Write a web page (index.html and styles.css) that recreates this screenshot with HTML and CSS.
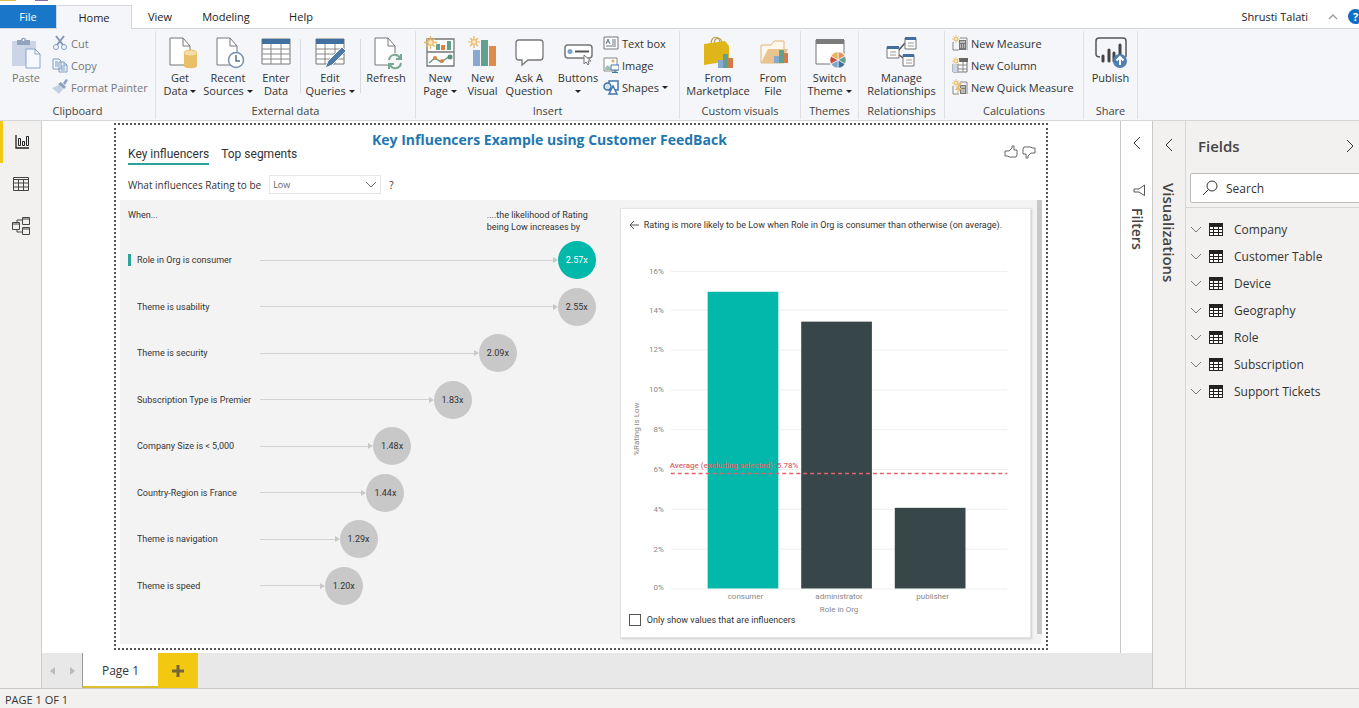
FILE: index.html
```html
<!DOCTYPE html>
<html lang="en">
<head>
<meta charset="UTF-8">
<meta name="viewport" content="width=device-width, initial-scale=1.0">
<title>Key Influencers - Power BI Desktop</title>
<link rel="stylesheet" href="styles.css">
</head>
<body>
<!-- Shared symbols -->
<svg class="symbols" width="0" height="0">
<symbol id="table" viewBox="0 0 14 13"><path d="M0 0h14v13H0z" fill="#222"/><path d="M1 4h3v2H1zm4 0h4v2H5zm5 0h3v2h-3zM1 7h3v2H1zm4 0h4v2H5zm5 0h3v2h-3zM1 10h3v2H1zm4 0h4v2H5zm5 0h3v2h-3z" fill="#fff"/></symbol>
<symbol id="down" viewBox="0 0 12 8"><path d="M1 1l5 5 5-5" fill="none" stroke="#777"/></symbol>
<symbol id="left" viewBox="0 0 8 14"><path d="M7 1L1 7l6 6" fill="none" stroke="#333"/></symbol>
<symbol id="right" viewBox="0 0 8 14"><path d="M1 1l6 6-6 6" fill="none" stroke="#333"/></symbol>
<symbol id="sun" viewBox="0 0 12 12"><path d="M6 0v12M0 6h12M2 2l8 8M10 2l-8 8" stroke="#e9b765" stroke-width="1.2"/><circle cx="6" cy="6" r="2.5" fill="#fbe6bd" stroke="#e9b765"/></symbol>
</svg>

<header class="titlebar">
<div class="quick"><span class="chip gold"></span><span class="chip purple"></span></div>
<nav class="tabs">
<button class="tab file">File</button>
<button class="tab active">Home</button>
<button class="tab view">View</button>
<button class="tab modeling">Modeling</button>
<button class="tab help">Help</button>
<span class="user">Shrusti Talati</span>
<svg class="collapse" width="10" height="6" viewBox="0 0 10 6"><path d="M1 5l4-4 4 4" fill="none" stroke="#999" stroke-width="1.3"/></svg>
<span class="question">?</span>
</nav>
</header>

<div class="ribbon">
<section class="group clipboard">
<div class="tools">
<button class="tool muted"><svg width="34" height="34" viewBox="0 0 34 34"><path d="M3 5h24v25H3z" fill="#ccd5e8"/><path d="M8 9V4h4c0-3 5-3 5 0h4v5z" fill="#92a3bb"/><circle cx="14.500" cy="4" r="1" fill="#fff"/><path d="M17 13h9l5 5v14H17z" fill="#f5f8fd" stroke="#8aa3cb"/><path d="M26 13v5h5" fill="none" stroke="#8aa3cb"/></svg>Paste</button>
<div class="stack muted">
<button class="small"><svg width="16" height="16" viewBox="0 0 16 16"><path d="M4 1l7 9M12 1L5 10" stroke="#8498b5" stroke-width="2"/><circle cx="4" cy="12" r="2.500" fill="none" stroke="#7f9dc5"/><circle cx="12" cy="12" r="2.500" fill="none" stroke="#7f9dc5"/></svg>Cut</button>
<button class="small"><svg width="16" height="16" viewBox="0 0 16 16"><path d="M1 2h6l2 2v8H1zM7 5h5l3 3v7H7zM12 5v3h3M3 5h3M3 7h3M3 9h3M9 9h4M9 11h4M9 13h4" fill="#f2f6fc" stroke="#7f9dc5"/></svg>Copy</button>
<button class="small"><svg width="16" height="16" viewBox="0 0 16 16"><path d="M0 9l7-3 4 4-4 5z" fill="#c3d0e4"/><path d="M6 5l3-2 5 5-2 2z" fill="#8ba0be"/><path d="M11 4l3-4 2 1-3 5z" fill="#8ba0be"/></svg>Format Painter</button>
</div>
</div>
<h2>Clipboard</h2>
</section>

<section class="group external">
<div class="tools">
<button class="tool"><svg width="34" height="34" viewBox="0 0 34 34"><path d="M7 2h13l7 8v19H7z" fill="#fff" stroke="#777"/><path d="M20 2v8h7" fill="none" stroke="#777"/><path d="M21 17v13c0 3 13 3 13 0V17z" fill="#e9c069"/><ellipse cx="27.500" cy="17" rx="6.500" ry="3" fill="#f5dda6" stroke="#e9c069"/></svg>Get<span>Data <i class="caret"></i></span></button>
<button class="tool"><svg width="34" height="34" viewBox="0 0 34 34"><path d="M6 2h13l7 8v19H6z" fill="#fff" stroke="#777"/><path d="M19 2v8h7" fill="none" stroke="#777"/><circle cx="25" cy="24" r="7.500" fill="#fff" stroke="#7892ad" stroke-width="1.500"/><path d="M25 19v6h4" fill="none" stroke="#58728e" stroke-width="1.500"/></svg>Recent<span>Sources <i class="caret"></i></span></button>
<button class="tool"><svg width="34" height="34" viewBox="0 0 34 34"><path d="M3 3h28v25H3z" fill="#fff" stroke="#777"/><path d="M3 3h28v5H3z" fill="#416f9f"/><path d="M3 13h28M3 18h28M3 23h28M12 8v20M22 8v20" stroke="#888"/></svg>Enter<span>Data</span></button>
<button class="tool split"><svg width="34" height="34" viewBox="0 0 34 34"><path d="M3 3h28v25H3z" fill="#fff" stroke="#777"/><path d="M3 3h28v5H3z" fill="#416f9f"/><path d="M3 13h28M3 18h28M3 23h28M12 8v20M22 8v20" stroke="#888"/><path d="M12 32l3-7 14-14 4 4-14 14z" fill="#4d79a9" stroke="#f4f6f9"/></svg>Edit<span>Queries <i class="caret"></i></span></button>
<button class="tool split"><svg width="34" height="34" viewBox="0 0 34 34"><path d="M6 2h13l7 8v19H6z" fill="#fff" stroke="#777"/><path d="M19 2v8h7" fill="none" stroke="#777"/><circle cx="26" cy="25" r="8" fill="#f4f6f9"/><path d="M20 24c1-6 8-7 11-2m1-4v5h-5M32 27c-1 6-8 7-11 2m-1 4v-5h5" fill="none" stroke="#78a891" stroke-width="2"/></svg>Refresh</button>
</div>
<h2>External data</h2>
</section>

<section class="group insert">
<div class="tools">
<button class="tool"><svg width="34" height="34" viewBox="0 0 34 34"><path d="M4 3h27v27H4zM4 16h27" fill="#fff" stroke="#777" stroke-width="1.300"/><path d="M13 8h4v6h-4zM24 5h4v9h-4z" fill="#62a08c"/><path d="M18 9h4v5h-4z" fill="#d98443"/><path d="M6 27l6-5 6 4 9-6" fill="none" stroke="#6a9688" stroke-width="1.500"/><circle cx="12" cy="22" r="2" fill="#d98443"/><circle cx="19" cy="25" r="2" fill="#d98443"/><circle cx="27" cy="21" r="2.500" fill="#57917e"/><use href="#sun" x="1" y="0" width="13" height="13"/></svg>New<span>Page <i class="caret"></i></span></button>
<button class="tool"><svg width="34" height="34" viewBox="0 0 34 34"><path d="M7 14h7v16H7z" fill="#88a9cf"/><path d="M15 4h7v26h-7z" fill="#63a18f"/><path d="M23 10h7v20h-7z" fill="#df8b49"/><use href="#sun" x="2" y="0" width="12" height="12"/></svg>New<span>Visual</span></button>
<button class="tool"><svg width="34" height="34" viewBox="0 0 34 34"><path d="M6 4h22q3 0 3 3v14q0 3-3 3H16l-6 5v-5H7q-3 0-3-3V7q0-3 3-3z" fill="#fff" stroke="#777" stroke-width="1.300"/></svg>Ask A<span>Question</span></button>
<button class="tool"><svg width="34" height="34" viewBox="0 0 34 34"><rect x="4" y="9" width="27" height="13" rx="3" fill="#fff" stroke="#777" stroke-width="1.500"/><circle cx="9" cy="15.500" r="2.500" fill="#7aa3c8"/><path d="M14 15.500h14" stroke="#555" stroke-width="2"/><path d="M23 19v9l2-2 2 3 1-1-1-3h3z" fill="#fff" stroke="#777"/></svg>Buttons<span><i class="caret"></i></span></button>
<div class="stack">
<button class="small"><svg width="16" height="16" viewBox="0 0 16 16"><path d="M1 2h14v12H1z" fill="#fff" stroke="#777"/><path d="M3 9l2-5 2 5M4 7h2M9 5h4M9 7h4M9 9h4M3 11h10" fill="none" stroke="#66788a"/></svg>Text box</button>
<button class="small"><svg width="16" height="16" viewBox="0 0 16 16"><path d="M1 1h13v13H1z" fill="#fff" stroke="#888"/><circle cx="10" cy="4" r="1.500" fill="#e2ae5d"/><path d="M2 13c0-6 5-6 6 0z" fill="#9fc0b3"/><path d="M8 8h8v5H8zM12 13v2M9 15.500h6" fill="#fff" stroke="#3f76ae"/></svg>Image</button>
<button class="small"><svg width="16" height="16" viewBox="0 0 16 16"><path d="M6 2h9v9H6z" fill="#fff" stroke="#3f76ae" stroke-width="1.500"/><circle cx="4.500" cy="7.500" r="3.500" fill="#d5e2ef" stroke="#3f76ae" stroke-width="1.500"/><path d="M10 7l4 8H6z" fill="#fff" stroke="#3f76ae" stroke-width="1.500"/></svg>Shapes <i class="caret"></i></button>
</div>
</div>
<h2>Insert</h2>
</section>

<section class="group custom">
<div class="tools">
<button class="tool"><svg width="34" height="34" viewBox="0 0 34 34"><path d="M10 8c0-9 9-9 9 0M13 9c0-9 8-9 8-1" fill="none" stroke="#b9a04c" stroke-width="1.200"/><path d="M3 8l21-3 4 5v15L3 29z" fill="#dfb51a"/><path d="M17 24h5v8h-5z" fill="#88a9cf"/><path d="M22 18h5v14h-5z" fill="#63a18f"/><path d="M27 22h5v10h-5z" fill="#cf7c4a"/></svg>From<span>Marketplace</span></button>
<button class="tool"><svg width="34" height="34" viewBox="0 0 34 34"><path d="M5 27V9h10l3-4h10v22z" fill="#fdf7ec" stroke="#e4b779"/><path d="M5 27l7-14h20l-6 14z" fill="#eac48e"/><path d="M18 20h5v7h-5z" fill="#88a9cf"/><path d="M23 14h5v13h-5z" fill="#63a18f"/><path d="M28 17h4v10h-4z" fill="#cf7c4a"/></svg>From<span>File</span></button>
</div>
<h2>Custom visuals</h2>
</section>

<section class="group themes">
<div class="tools">
<button class="tool"><svg width="34" height="34" viewBox="0 0 34 34"><path d="M3 4h28v24H3z" fill="#fff" stroke="#777"/><path d="M3 3h28v5H3z" fill="#7b7b7b"/><circle cx="25" cy="24" r="9" fill="#fff"/><g stroke="#fff" stroke-width=".6"><path d="M25 24v-8a8 8 0 0 1 7 4z" fill="#e2945c"/><path d="M25 24l7-4a8 8 0 0 1 0 8z" fill="#62a08c"/><path d="M25 24l7 4a8 8 0 0 1-7 4z" fill="#3f6fa0"/><path d="M25 24v8a8 8 0 0 1-7-4z" fill="#7aa3c8"/><path d="M25 24l-7 4a8 8 0 0 1 0-8z" fill="#c94b3c"/><path d="M25 24l-7-4a8 8 0 0 1 7-4z" fill="#e8b55b"/></g></svg>Switch<span>Theme <i class="caret"></i></span></button>
</div>
<h2>Themes</h2>
</section>

<section class="group relations">
<div class="tools">
<button class="tool"><svg width="34" height="34" viewBox="0 0 34 34"><path d="M13 15l7-8M13 18l5 4" stroke="#555" stroke-width="1.500"/><path d="M2 11h12v11H2zM20 2h11v11H20zM18 19h11v11H18z" fill="#fff" stroke="#777"/><path d="M2 10h12v3H2zM20 1h11v3H20zM18 18h11v3H18z" fill="#416f9f"/><path d="M5 16h6M5 19h6M23 7h6M23 10h6M21 24h6M21 27h6" stroke="#999"/></svg>Manage<span>Relationships</span></button>
</div>
<h2>Relationships</h2>
</section>

<section class="group calc">
<div class="tools">
<div class="stack">
<button class="small"><svg width="16" height="16" viewBox="0 0 16 16"><path d="M1 7v8h6M8 3h7v12" fill="none" stroke="#888"/><path d="M7 5h7v10H7z" fill="#777"/><path d="M8 7h5M8 10h1m1 0h1m1 0h1M8 12h1m1 0h1m1 0h1" stroke="#fff"/><use href="#sun" width="8" height="8"/></svg>New Measure</button>
<button class="small"><svg width="16" height="16" viewBox="0 0 16 16"><path d="M1 2h14v13H1z" fill="#fff" stroke="#777"/><path d="M7 1h9v4H7z" fill="#666"/><path d="M1 7h5v8H1z" fill="#c9d7ea"/><path d="M6 5v10M11 5v10M6 8h9M6 12h9" stroke="#888"/><path d="M0 0h7v7H0z" fill="#f4f6f9"/><use href="#sun" width="8" height="8"/></svg>New Column</button>
<button class="small"><svg width="16" height="16" viewBox="0 0 16 16"><path d="M1 7v8h6M8 3h7v12" fill="none" stroke="#888"/><path d="M8 6h6v9H8z" fill="#777"/><path d="M9 8h4M9 11h4M9 13h4" stroke="#fff"/><path d="M7 4L3 11h3l-2 5 6-7H7l3-5z" fill="#e5bd7c"/><use href="#sun" width="8" height="8"/></svg>New Quick Measure</button>
</div>
</div>
<h2>Calculations</h2>
</section>

<section class="group share">
<div class="tools">
<button class="tool"><svg width="34" height="34" viewBox="0 0 34 34"><path d="M6 21c-3 0-4-1-4-3V5q0-3 3-3h24q3 0 3 3v16" fill="none" stroke="#555" stroke-width="1.500"/><path d="M9 20v5M15 14v11M20 17v8M26 9v14" stroke="#444" stroke-width="3" stroke-linecap="round"/><circle cx="26" cy="25" r="7" fill="#4f7fae"/><path d="M26 29v-8M22.500 24.500L26 21l3.500 3.500" fill="none" stroke="#fff" stroke-width="2"/></svg>Publish</button>
</div>
<h2>Share</h2>
</section>
</div>

<main class="workspace">
<nav class="rail">
<button class="railbtn on" aria-label="Report"><svg width="20" height="20" viewBox="0 0 20 20"><path d="M4 3v13h13" fill="none" stroke="#222" stroke-width="1.300"/><path d="M6.500 6.500h2v7h-2zM10.500 9.500h2v4h-2zM14.500 4.500h2v9h-2z" fill="none" stroke="#222"/></svg></button>
<button class="railbtn" aria-label="Data"><svg width="20" height="20" viewBox="0 0 20 20"><path d="M2.500 3.500h15v13h-15zM2.500 5.500h15M2.500 9h15M2.500 13h15M7.500 5.500v11M12.500 5.500v11" fill="none" stroke="#444"/></svg></button>
<button class="railbtn" aria-label="Model"><svg width="20" height="20" viewBox="0 0 20 20"><path d="M1.500 6.500h7v7h-7zM11.500 1.500h7v7h-7zM11.500 11.500h7v7h-7zM1.500 8h7M11.500 3h7M11.500 13h7M6 6.500V4h5.500M6 13.500V16h5.500" fill="none" stroke="#444"/></svg></button>
</nav>

<div class="center">
<div class="stage">
<div class="canvas">
<article class="report">
<div class="top">
<div class="modes"><a href="#key" class="mode on">Key influencers</a><a href="#segments" class="mode">Top segments</a></div>
<h1>Key Influencers Example using Customer FeedBack</h1>
<div class="thumbs">
<svg width="14" height="14" viewBox="0 0 14 14"><path d="M1 6h4l3-3V1h2v4h3v5l-1 2H5l-1-1H1z" fill="none" stroke="#666"/></svg>
<svg width="14" height="14" viewBox="0 0 14 14"><path d="M13 8H9l-3 3v2H4V9H1V4l1-2h7l1 1h3z" fill="none" stroke="#666"/></svg>
</div>
</div>
<div class="ask">
<label for="rating">What influences Rating to be</label>
<span class="pick"><select id="rating"><option>Low</option><option>High</option></select><svg width="12" height="8"><use href="#down"/></svg></span>
<span>?</span>
</div>
<div class="body">
<div class="factors">
<div class="heads"><span>When...</span><span class="likely">....the likelihood of Rating<br>being Low increases by</span></div>
<ul class="list">
<li class="on"><span class="name">Role in Org is consumer</span><span class="track"><span class="reach" style="width:100%"><i></i><b>2.57x</b></span></span></li>
<li><span class="name">Theme is usability</span><span class="track"><span class="reach" style="width:100%"><i></i><b>2.55x</b></span></span></li>
<li><span class="name">Theme is security</span><span class="track"><span class="reach" style="width:76.5%"><i></i><b>2.09x</b></span></span></li>
<li><span class="name">Subscription Type is Premier</span><span class="track"><span class="reach" style="width:63%"><i></i><b>1.83x</b></span></span></li>
<li><span class="name">Company Size is &lt; 5,000</span><span class="track"><span class="reach" style="width:45%"><i></i><b>1.48x</b></span></span></li>
<li><span class="name">Country-Region is France</span><span class="track"><span class="reach" style="width:43%"><i></i><b>1.44x</b></span></span></li>
<li><span class="name">Theme is navigation</span><span class="track"><span class="reach" style="width:35%"><i></i><b>1.29x</b></span></span></li>
<li><span class="name">Theme is speed</span><span class="track"><span class="reach" style="width:30.6%"><i></i><b>1.20x</b></span></span></li>
</ul>
</div>
<div class="card">
<p class="why"><svg width="10" height="10" viewBox="0 0 10 10"><path d="M10 5H1M5 1L1 5l4 4" fill="none" stroke="#555"/></svg>Rating is more likely to be Low when Role in Org is consumer than otherwise (on average).</p>
<svg class="chart" viewBox="0 0 411 376">
<path d="M50 31.500h338M50 70.500h338M50 110.500h338M50 150.500h338M50 190.500h338M50 230.500h338M50 270.500h338M50 310.500h338M50 350.500h338" stroke="#eee"/>
<g class="ticks"><text x="43" y="34">16%</text><text x="43" y="73">14%</text><text x="43" y="113">12%</text><text x="43" y="153">10%</text><text x="43" y="193">8%</text><text x="43" y="233">6%</text><text x="43" y="273">4%</text><text x="43" y="313">2%</text><text x="43" y="352">0%</text></g>
<rect x="87" y="52" width="71" height="298" fill="#01b8aa"/>
<rect x="181" y="82" width="71" height="268" fill="#374649"/>
<rect x="275" y="269" width="71" height="81" fill="#374649"/>
<path d="M50 234.500h338" stroke="#e0646c" stroke-width="1.500" stroke-dasharray="4 3"/>
<text class="avg" x="49" y="229">Average (excluding selected): 5.78%</text>
<g class="cats"><text x="125" y="361">consumer</text><text x="219" y="361">administrator</text><text x="313" y="361">publisher</text><text x="219" y="374">Role in Org</text><text transform="translate(18 190) rotate(-90)">%Rating is Low</text></g>
</svg>
<label class="only"><input type="checkbox">Only show values that are influencers</label>
</div>
<div class="scroll"></div>
</div>
</article>
</div>
<aside class="filters">
<svg width="8" height="14"><use href="#left"/></svg>
<svg class="funnel" width="12" height="12" viewBox="0 0 12 12"><path d="M11.500 1v10.500L6 8H1V5h5z" fill="none" stroke="#555"/></svg>
<h3>Filters</h3>
</aside>
</div>
<nav class="pages">
<button class="arrow" aria-label="Previous page"><svg width="5" height="8" viewBox="0 0 5 8"><path d="M5 0v8L0 4z" fill="#bbb"/></svg></button>
<button class="arrow" aria-label="Next page"><svg width="5" height="8" viewBox="0 0 5 8"><path d="M0 0v8l5-4z" fill="#bbb"/></svg></button>
<button class="page">Page 1</button>
<button class="add" aria-label="New page"><svg width="12" height="12" viewBox="0 0 12 12"><path d="M6 0v12M0 6h12" stroke="#75663a" stroke-width="3"/></svg></button>
</nav>
</div>

<aside class="visuals">
<svg width="8" height="14"><use href="#left"/></svg>
<h3>Visualizations</h3>
</aside>

<aside class="fields">
<div class="fieldhead"><h3>Fields</h3><svg width="8" height="14"><use href="#right"/></svg></div>
<label class="search"><svg width="16" height="16" viewBox="0 0 16 16"><circle cx="10" cy="6" r="5" fill="none" stroke="#333"/><path d="M6.500 9.500L1 15" stroke="#333"/></svg><input type="text" placeholder="Search" aria-label="Search fields"></label>
<ul class="tables">
<li><svg width="12" height="8"><use href="#down"/></svg><svg width="14" height="13"><use href="#table"/></svg>Company</li>
<li><svg width="12" height="8"><use href="#down"/></svg><svg width="14" height="13"><use href="#table"/></svg>Customer Table</li>
<li><svg width="12" height="8"><use href="#down"/></svg><svg width="14" height="13"><use href="#table"/></svg>Device</li>
<li><svg width="12" height="8"><use href="#down"/></svg><svg width="14" height="13"><use href="#table"/></svg>Geography</li>
<li><svg width="12" height="8"><use href="#down"/></svg><svg width="14" height="13"><use href="#table"/></svg>Role</li>
<li><svg width="12" height="8"><use href="#down"/></svg><svg width="14" height="13"><use href="#table"/></svg>Subscription</li>
<li><svg width="12" height="8"><use href="#down"/></svg><svg width="14" height="13"><use href="#table"/></svg>Support Tickets</li>
</ul>
</aside>
</main>

<footer class="status">PAGE 1 OF 1</footer>
</body>
</html>
```
FILE: styles.css
```css
* {
  box-sizing: border-box;
}
body {
  margin: 0;
  min-height: 100vh;
  display: flex;
  flex-direction: column;
  overflow-x: hidden;
  font-family: "Open Sans", sans-serif;
  font-size: 11px;
  color: #333;
  background: #fff;
}
button, input, select {
  font: inherit;
  color: inherit;
  border: 0;
  padding: 0;
  background: none;
}
h1, h2, h3, p, ul {
  margin: 0;
  padding: 0;
  list-style: none;
}
svg {
  flex: none;
}
.symbols {
  position: absolute;
}

/* Title bar */
.quick {
  display: flex;
  height: 5px;
}
.chip {
  height: 1px;
  width: 16px;
}
.gold {
  background: #d8bd52;
}
.purple {
  width: 13px;
  margin-left: 19px;
  background: #8a6aa0;
}
.tabs {
  display: flex;
  align-items: center;
  height: 24px;
  border-bottom: 1px solid #d5d6d8;
}
.tab {
  height: 23px;
  color: #222;
}
.file {
  width: 56px;
  color: #fff;
  background: #1976c9;
}
.active {
  width: 76px;
  height: 24px;
  margin-bottom: -1px;
  border: 1px solid #d5d6d8;
  border-bottom: 0;
  background: #f4f6f9;
}
.view {
  width: 56px;
}
.modeling {
  width: 76px;
}
.help {
  width: 74px;
}
.user {
  margin-left: auto;
  color: #222;
}
.collapse {
  margin: 0 10px 0 20px;
}
.question {
  flex: none;
  width: 15px;
  height: 15px;
  margin-right: -4px;
  border-radius: 50%;
  background: #0f6fc6;
  color: #fff;
  font-weight: bold;
  line-height: 15px;
  text-align: center;
}

/* Ribbon */
.ribbon {
  display: grid;
  grid-template-columns: 156px 260px 264px 121px 58px 86px 139px 54px;
  height: 92px;
  padding: 2px 0 1px;
  background: #f4f6f9;
  border-bottom: 1px solid #d5d6d8;
}
.group {
  display: flex;
  flex-direction: column;
  border-right: 1px solid #dfe1e4;
}
.group h2 {
  margin-top: auto;
  padding-bottom: 1px;
  font-size: 11px;
  font-weight: normal;
  line-height: 14px;
  text-align: center;
  color: #444;
}
.tools {
  display: grid;
  grid-auto-flow: column;
  line-height: 13px;
}
.clipboard .tools {
  grid-template-columns: 52px 1fr;
}
.external .tools {
  grid-template-columns: 48px 48px 48px 60px 52px;
}
.insert .tools {
  grid-template-columns: 48px 37px 56px 42px 1fr;
}
.custom .tools {
  grid-template-columns: 76px 34px;
}
.tool {
  display: flex;
  flex-direction: column;
  align-items: center;
  height: 70px;
  padding-top: 5px;
  white-space: nowrap;
  line-height: 13px;
}
.tool svg {
  margin-bottom: 1px;
}
.split {
  background: linear-gradient(#d9dbde, #d9dbde) 0 8px / 1px 54px no-repeat;
}
.muted {
  color: #777;
}
.caret {
  display: inline-block;
  border: 3px solid transparent;
  border-top-color: #222;
  border-bottom: 0;
  vertical-align: 2px;
}
.stack {
  display: flex;
  flex-direction: column;
  padding-top: 1px;
}
.insert .stack {
  padding-left: 4px;
}
.calc .stack {
  padding-left: 7px;
}
.small {
  display: flex;
  align-items: center;
  gap: 3px;
  height: 22px;
  white-space: nowrap;
}

/* Workspace */
.workspace {
  flex: 1;
  display: flex;
}
.rail {
  width: 42px;
  flex: none;
  background: #f3f1ef;
  border-right: 1px solid #ccc;
}
.railbtn {
  display: flex;
  align-items: center;
  justify-content: center;
  width: 41px;
  height: 42px;
}
.railbtn.on {
  border-left: 3px solid #f2c811;
}
.center {
  flex: 1;
  min-width: 0;
  display: flex;
  flex-direction: column;
}
.stage {
  flex: 1;
  display: flex;
}
.canvas {
  flex: 1;
  display: flex;
  padding: 2px 72px 3px;
}
.report {
  flex: 1;
  display: flex;
  flex-direction: column;
  border: 2px dotted #555;
}
.top {
  display: grid;
  grid-template-columns: 256px auto 1fr;
  align-items: start;
  height: 44px;
}
.modes {
  display: flex;
  gap: 12px;
  padding: 20px 0 0 12px;
  font-family: Roboto, sans-serif;
}
.mode {
  color: #333;
  font-size: 12px;
  line-height: 18px;
  text-decoration: none;
  border-bottom: 2px solid transparent;
}
.mode.on {
  border-color: #2ba39a;
}
h1 {
  padding-top: 5px;
  font-size: 14px;
  line-height: 20px;
  color: #1f77b0;
}
.thumbs {
  display: flex;
  justify-content: end;
  gap: 4px;
  padding: 20px 10px 0 0;
}
.ask {
  display: flex;
  align-items: center;
  gap: 8px;
  height: 31px;
  padding-left: 12px;
  font-size: 10px;
}
.pick {
  display: flex;
  align-items: center;
  width: 112px;
  height: 19px;
  padding-right: 3px;
  border: 1px solid #e6e6e6;
}
.pick select {
  flex: 1;
  appearance: none;
  padding-left: 3px;
  font-size: 9px;
  color: #666;
}
.body {
  flex: 1;
  display: flex;
  margin: 0 4px 4px;
  background: #f3f3f3;
  font-family: Roboto, sans-serif;
}
.factors {
  flex: 1;
  display: flex;
  flex-direction: column;
  padding: 9px 24px 35px 8px;
  font-size: 9px;
}
.heads {
  display: flex;
  justify-content: space-between;
  line-height: 12px;
}
.likely {
  width: 109px;
  white-space: nowrap;
}
.list {
  flex: 1;
  display: flex;
  flex-direction: column;
  padding-top: 4px;
}
.list li {
  flex: 1;
  display: flex;
  align-items: center;
}
.name {
  flex: none;
  width: 132px;
  padding-left: 6px;
  border-left: 3px solid transparent;
  line-height: 12px;
}
.on .name {
  border-color: #2ba39a;
}
.track {
  flex: 1;
}
.reach {
  display: flex;
  align-items: center;
}
.reach i {
  flex: 1;
  display: flex;
  align-items: center;
}
.reach i::before {
  content: "";
  flex: 1;
  height: 1px;
  background: #d3d3d3;
}
.reach i::after {
  content: "";
  border: 3px solid transparent;
  border-left: 5px solid #c8c8c8;
  border-right: 0;
}
.reach b {
  width: 38px;
  height: 38px;
  border-radius: 50%;
  background: #c8c8c8;
  font-weight: normal;
  line-height: 38px;
  text-align: center;
}
.on .reach b {
  background: #01b8aa;
  color: #fff;
}
.card {
  width: 44.6%;
  flex: none;
  display: flex;
  flex-direction: column;
  margin: 8px 6px 6px 0;
  background: #fff;
  border: 1px solid #e4e4e4;
  box-shadow: 1px 1px 2px #ccc;
}
.why {
  display: flex;
  align-items: center;
  gap: 5px;
  height: 31px;
  padding-left: 8px;
  font-size: 9px;
  white-space: nowrap;
}
.chart {
  width: 100%;
  font-size: 8px;
}
.ticks {
  fill: #888;
  text-anchor: end;
}
.cats {
  fill: #888;
  text-anchor: middle;
}
.avg {
  fill: #e0646c;
  font-weight: 500;
}
.only {
  display: flex;
  align-items: center;
  gap: 6px;
  padding-left: 8px;
  font-size: 9px;
}
.only input {
  appearance: none;
  width: 12px;
  height: 12px;
  margin: 0;
  border: 1px solid #555;
}
.scroll {
  width: 5px;
  margin-bottom: 10px;
  background: #c8c8c8;
}

/* Side panels */
.filters, .visuals {
  flex: none;
  display: flex;
  flex-direction: column;
  align-items: center;
  width: 32px;
  padding-top: 15px;
  border-left: 1px solid #c8c8c8;
}
.filters h3, .visuals h3 {
  writing-mode: vertical-rl;
  font-size: 14px;
  line-height: 18px;
  font-weight: 600;
  color: #444;
}
.funnel {
  margin: 34px 0 12px 4px;
}
.visuals {
  width: 33px;
  padding-top: 17px;
  background: #f3f1ef;
}
.visuals h3 {
  margin-top: 31px;
  font-size: 15px;
}
.fields {
  flex: none;
  width: 174px;
  background: #f3f1ef;
  border-left: 1px solid #d6d6d6;
}
.fieldhead {
  display: flex;
  align-items: center;
  justify-content: space-between;
  height: 49px;
  padding: 0 5px 0 12px;
}
.fieldhead h3 {
  font-size: 15px;
  font-weight: 600;
  color: #444;
}
.search {
  display: flex;
  align-items: center;
  gap: 8px;
  height: 30px;
  margin: 3px -4px 4px 4px;
  padding-left: 11px;
  background: #fff;
  border: 1px solid #bbb;
  border-radius: 2px;
}
.search input {
  width: 100px;
  font-size: 12px;
}
.search input::placeholder {
  color: #333;
}
.tables {
  padding-top: 8px;
  border-top: 1px solid #d6d6d6;
}
.tables li {
  display: flex;
  align-items: center;
  height: 27px;
  padding-left: 4px;
  font-size: 12px;
}
.tables svg + svg {
  margin: 0 11px 0 7px;
}

/* Page tabs and status */
.pages {
  display: flex;
  height: 35px;
  background: #e8e8e8;
}
.arrow {
  width: 20px;
}
.page {
  width: 76px;
  padding-top: 2px;
  background: #fff;
  border-left: 1px solid #999;
  border-bottom: 2px solid #e0bd2c;
  font-size: 12px;
}
.add {
  width: 40px;
  padding-top: 4px;
  background: #f2c811;
}
.status {
  height: 20px;
  padding-left: 5px;
  background: #f3f1ef;
  border-top: 1px solid #c8c8c8;
  line-height: 22px;
}
```
